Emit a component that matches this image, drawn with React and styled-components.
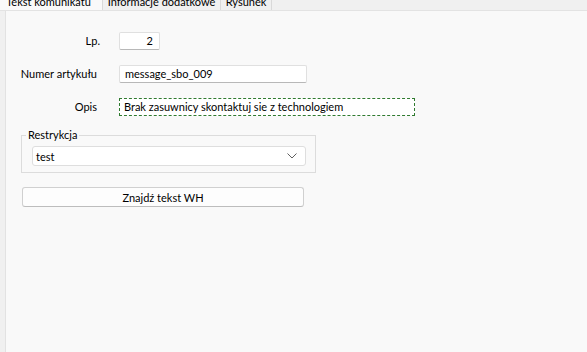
import React from 'react';
import styled, { createGlobalStyle } from 'styled-components';

const GlobalStyle = createGlobalStyle`
  html, body {
    margin: 0;
    padding: 0;
    background: #f9f9f9;
  }
  body {
    font-family: Lato, "Noto Sans", sans-serif;
    font-size: 11px;
    color: #000;
  }
`;

const Window = styled.div`
  width: 587px;
  height: 352px;
  overflow: hidden;
  display: flex;
  flex-direction: column;
  background: #f9f9f9;
`;

const TabBar = styled.div`
  display: flex;
  height: 18px;
  margin-top: -8px;
  background: #f0f0f0;
  border-bottom: 1px solid #e3e3e3;
  flex-shrink: 0;
`;

const Tab = styled.div`
  height: 18px;
  line-height: 16px;
  padding-top: 2px;
  margin-left: ${({ first }) => (first ? '-5px' : '0')};
  background: ${({ active }) => (active ? '#f9f9f9' : '#f0f0f0')};
  border-right: 1px solid #d9d9d9;
  margin-bottom: ${({ active }) => (active ? '-1px' : '0')};
  white-space: nowrap;
  box-sizing: border-box;
  width: ${({ w }) => w}px;
  text-align: center;
`;

const Body = styled.div`
  flex: 1;
  display: flex;
`;

const SideStrip = styled.div`
  width: 5px;
  background: #f0f0f0;
  border-right: 1px solid #e2e2e2;
`;

const Content = styled.div`
  flex: 1;
  padding-top: 21px;
`;

const Form = styled.div`
  display: grid;
  grid-template-columns: 93px auto;
  column-gap: 20px;
  row-gap: 15px;
  align-items: center;
  justify-items: start;
`;

const Label = styled.div`
  justify-self: end;
  margin-right: ${({ shift }) => shift || 0}px;
  line-height: 18px;
  white-space: nowrap;
`;

const TextBox = styled.div`
  box-sizing: border-box;
  width: ${({ w }) => w}px;
  height: 18px;
  line-height: 16px;
  background: #fff;
  border: 1px solid #e0e0e0;
  border-bottom-color: #b8b8b8;
  border-radius: 2px;
  padding: ${({ right }) => (right ? '0 6px 0 0' : '0 0 0 5px')};
  text-align: ${({ right }) => (right ? 'right' : 'left')};
  white-space: nowrap;
  overflow: hidden;
`;

const FocusBox = styled(TextBox)`
  border: 1px dashed #2f7a2f;
  border-radius: 0;
  padding-left: 4px;
`;

const Group = styled.fieldset`
  margin: 11px 0 0 15px;
  width: 295px;
  box-sizing: border-box;
  border: 1px solid #dcdcdc;
  padding: 3px 9px 6px 10px;
  border-radius: 0;
`;

const Legend = styled.legend`
  padding: 0 2px;
  margin-left: -6px;
  line-height: 16px;
`;

const Select = styled.div`
  box-sizing: border-box;
  height: 20px;
  background: #fff;
  border: 1px solid #dedede;
  border-radius: 3px;
  display: flex;
  align-items: center;
  justify-content: space-between;
  padding: 0 8px 0 3px;
`;

const Button = styled.div`
  margin: 14px 0 0 16px;
  width: 282px;
  height: 20px;
  box-sizing: border-box;
  background: #fdfdfd;
  border: 1px solid #d0d0d0;
  border-bottom-color: #bdbdbd;
  border-radius: 3px;
  display: flex;
  align-items: center;
  justify-content: center;
`;

const Chevron = () => (
  <svg width="10" height="6" viewBox="0 0 10 6">
    <path d="M0.5 0.5 L5 5 L9.5 0.5" fill="none" stroke="#606060" strokeWidth="1" />
  </svg>
);

export default function App() {
  return (
    <Window>
      <GlobalStyle />
      <TabBar>
        <Tab active first w={108}>Tekst komunikatu</Tab>
        <Tab w={118}>Informacje dodatkowe</Tab>
        <Tab w={51}>Rysunek</Tab>
      </TabBar>
      <Body>
        <SideStrip />
        <Content>
          <Form>
            <Label shift={-1}>Lp.</Label>
            <TextBox w={41} right>2</TextBox>
            <Label shift={2}>Numer artykułu</Label>
            <TextBox w={188}>message_sbo_009</TextBox>
            <Label shift={2}>Opis</Label>
            <FocusBox w={296}>Brak zasuwnicy skontaktuj sie z technologiem</FocusBox>
          </Form>
          <Group>
            <Legend>Restrykcja</Legend>
            <Select>
              <span>test</span>
              <Chevron />
            </Select>
          </Group>
          <Button>Znajdź tekst WH</Button>
        </Content>
      </Body>
    </Window>
  );
}
